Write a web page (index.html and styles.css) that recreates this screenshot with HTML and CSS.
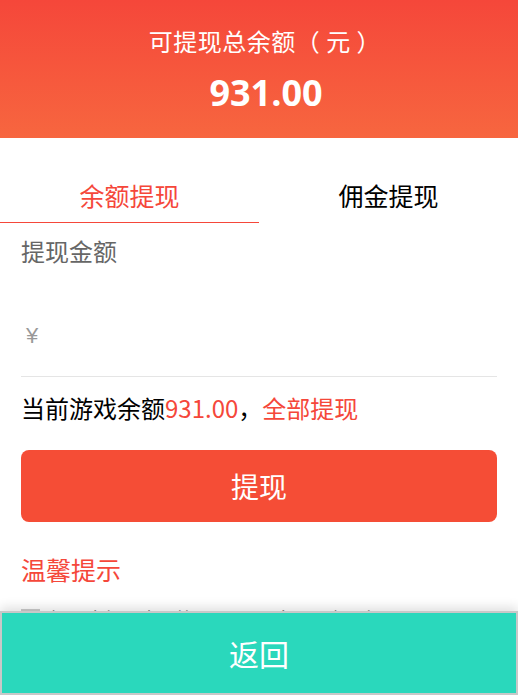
FILE: index.html
```html
<!DOCTYPE html>
<html lang="zh-CN">
  <head>
    <meta charset="UTF-8" />
    <meta name="viewport" content="width=device-width, initial-scale=1.0" />
    <title>提现</title>
    <link rel="stylesheet" href="styles.css">
  </head>
  <body>
    <div class="header">
      <p class="header-title">可提现总余额（ 元 ）</p>
      <p class="header-amount">931.00</p>
    </div>

    <div class="tabs">
      <div class="tab active">余额提现</div>
      <div class="tab">佣金提现</div>
    </div>

    <div class="form">
      <div class="label">提现金额</div>
      <div class="amount-row">
        <span class="currency">¥</span>
        <input type="text" class="amount-input" />
      </div>

      <div class="balance">
        当前游戏余额<span class="red">931.00</span>，<span class="red">全部提现</span>
      </div>

      <button class="btn">提现</button>

      <div class="tips-title">温馨提示</div>
      <ul class="tips">
        <li><span class="check"></span>提现金额需大于等于100元，每日限提3次</li>
        <li><span class="check"></span>提现申请提交后将在1-3个工作日内到账</li>
      </ul>
    </div>

    <div class="footer">
      <button class="back-btn">返回</button>
    </div>
  </body>
</html>
```

FILE: styles.css
```css
* {
  margin: 0;
  padding: 0;
  box-sizing: border-box;
}

body {
  font-family: "Microsoft YaHei", "Noto Sans CJK SC", sans-serif;
  background: white;
  color: #000;
}

.header {
  height: 138px;
  background: linear-gradient(180deg, #f5473a 0%, #f7663f 100%);
  color: white;
  text-align: center;
  padding-top: 26px;
}

.header-title {
  font-size: 24px;
  line-height: 30px;
  padding-left: 12px;
  letter-spacing: 0.5px;
}

.header-amount {
  font-family: "Open Sans", "Noto Sans", sans-serif;
  font-size: 36px;
  font-weight: 700;
  line-height: 44px;
  margin-top: 15px;
  padding-left: 14px;
}

.tabs {
  display: flex;
  margin-top: 32px;
}

.tab {
  flex: 1;
  text-align: center;
  font-size: 25px;
  line-height: 26px;
  padding: 12px 0 14px;
  border-bottom: 1px solid transparent;
}

.tab.active {
  color: #f5473a;
  border-bottom-color: #f5473a;
}

.form {
  padding: 0 21px 120px;
}

.label {
  font-size: 24px;
  line-height: 26px;
  color: #666;
  margin-top: 15px;
}

.amount-row {
  display: flex;
  align-items: center;
  height: 113px;
  padding: 47px 0 16px 5px;
  border-bottom: 1px solid #e5e5e5;
}

.currency {
  font-family: "Liberation Sans", sans-serif;
  font-size: 22px;
  color: #999;
  line-height: 50px;
}

.amount-input {
  flex: 1;
  border: none;
  outline: none;
  font-size: 22px;
  margin-left: 10px;
  background: transparent;
}

.balance {
  font-size: 24px;
  line-height: 26px;
  margin-top: 18px;
}

.red {
  color: #f5473a;
}

.btn {
  display: block;
  width: 100%;
  height: 72px;
  margin-top: 29px;
  background: #f54d36;
  color: white;
  border: none;
  border-radius: 8px;
  font-family: inherit;
  font-size: 28px;
}

.tips-title {
  color: #f5473a;
  font-size: 25px;
  line-height: 26px;
  margin-top: 34px;
}

.tips {
  list-style: none;
  margin-top: 22px;
}

.tips li {
  display: flex;
  align-items: center;
  font-size: 18px;
  color: #666;
  line-height: 28px;
}

.check {
  width: 19px;
  height: 19px;
  border: 2px solid #ccc;
  margin-right: 10px;
}

.footer {
  position: fixed;
  left: 0;
  right: 0;
  bottom: 0;
  height: 84px;
  box-shadow: 0 -4px 10px rgba(0, 0, 0, 0.12);
}

.back-btn {
  width: 100%;
  height: 100%;
  background: #2ad8bc;
  border: 2px solid #c8c8c8;
  color: white;
  font-family: inherit;
  font-size: 30px;
}
```
